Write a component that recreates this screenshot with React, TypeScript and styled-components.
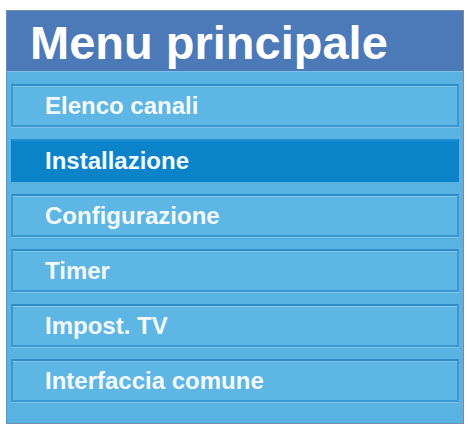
import React from 'react';
import styled, {createGlobalStyle} from 'styled-components';

const GlobalStyle = createGlobalStyle`
  html, body {
    margin: 0;
    padding: 0;
    background: #ffffff;
  }
  body {
    font-family: "Liberation Sans", Arial, sans-serif;
  }
`;

const Page = styled.div`
  width: 468px;
  height: 426px;
  padding: 10px 0 0 6px;
  box-sizing: border-box;
`;

const Panel = styled.div`
  width: 458px;
  height: 414px;
  box-sizing: border-box;
  border: 1px solid #6f8fb0;
  background: #58b3e2;
  display: flex;
  flex-direction: column;
`;

const Header = styled.div`
  height: 61px;
  flex: none;
  background: #4c79b8;
  border-bottom: 1px solid #7fbde6;
  display: flex;
  align-items: center;
  padding-left: 23px;
  box-sizing: border-box;
`;

const Title = styled.h1`
  margin: 0;
  font-size: 47px;
  font-weight: 700;
  letter-spacing: 0;
  color: #ffffff;
  line-height: 1;
  padding-top: 2px;
`;

const List = styled.div`
  display: flex;
  flex-direction: column;
  gap: 12px;
  padding: 12px 4px 0 4px;
`;

type RowProps = {$active?: boolean};

const Row = styled.div<RowProps>`
  height: 43px;
  box-sizing: border-box;
  display: flex;
  align-items: center;
  padding-left: 32px;
  background: ${p => (p.$active ? '#0b83c9' : '#5db6e4')};
  border: 2px solid ${p => (p.$active ? '#0b83c9' : '#3c98d0')};
  border-top-color: ${p => (p.$active ? '#1f8fd0' : '#2f8cc6')};
  box-shadow: ${p =>
    p.$active ? 'none' : 'inset 0 1px 0 #7ec6ec, 0 1px 0 #7cc3ea'};
`;

const Label = styled.span`
  font-size: 24px;
  font-weight: 700;
  color: #f4f9fc;
  line-height: 1;
`;

const items = [
  'Elenco canali',
  'Installazione',
  'Configurazione',
  'Timer',
  'Impost. TV',
  'Interfaccia comune',
];

const App = () => (
  <>
    <GlobalStyle />
    <Page>
      <Panel>
        <Header>
          <Title>Menu principale</Title>
        </Header>
        <List>
          {items.map((label, i) => (
            <Row key={label} $active={i === 1}>
              <Label>{label}</Label>
            </Row>
          ))}
        </List>
      </Panel>
    </Page>
  </>
);

export default App;
